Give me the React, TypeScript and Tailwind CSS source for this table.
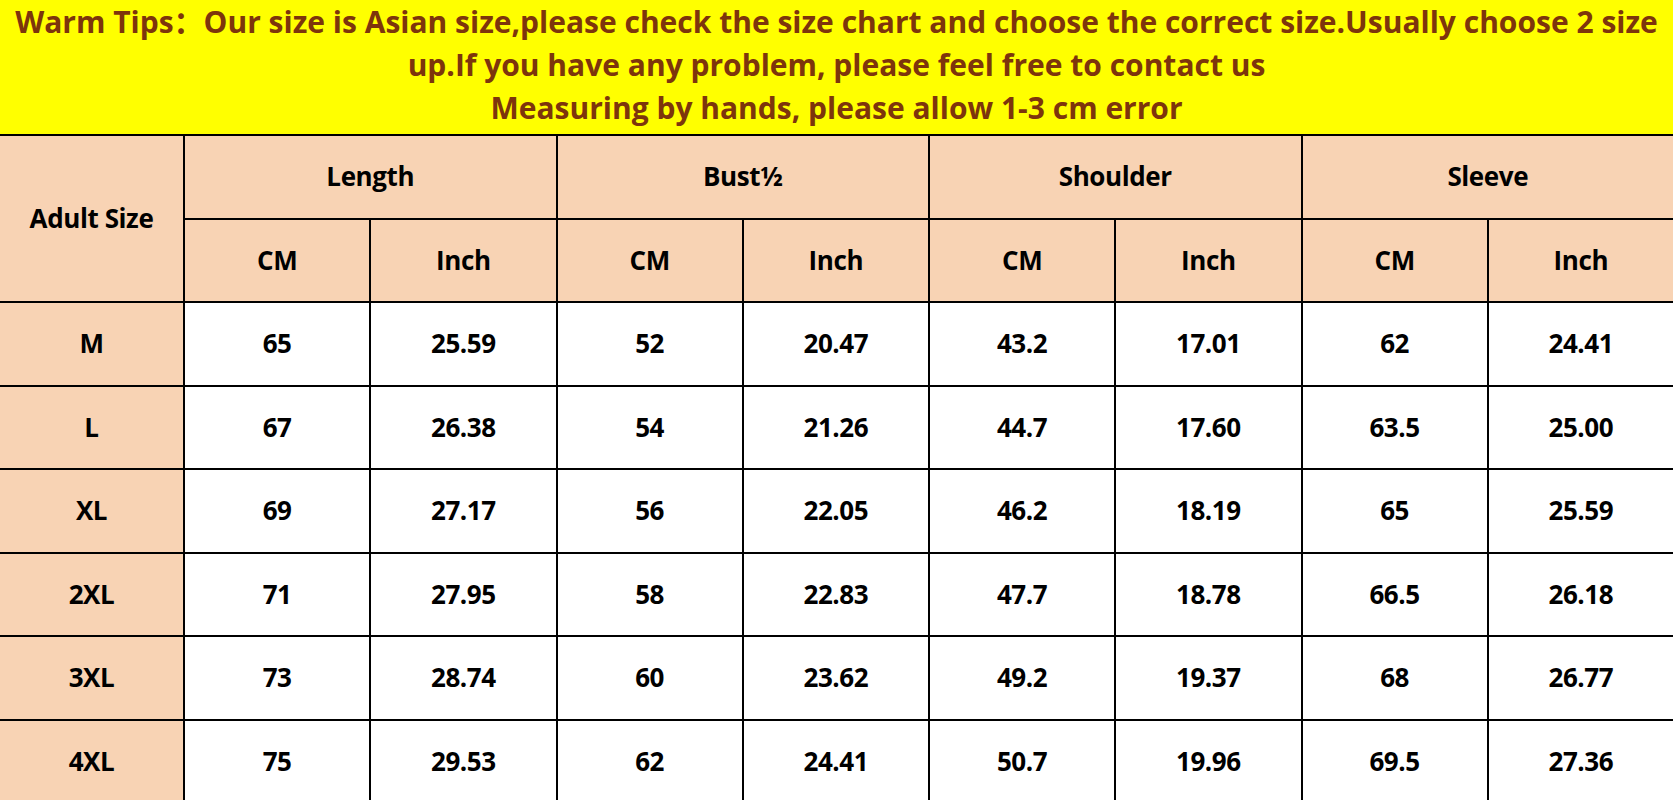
const ROWS = [
    ['M', '65', '25.59', '52', '20.47', '43.2', '17.01', '62', '24.41'],
    ['L', '67', '26.38', '54', '21.26', '44.7', '17.60', '63.5', '25.00'],
    ['XL', '69', '27.17', '56', '22.05', '46.2', '18.19', '65', '25.59'],
    ['2XL', '71', '27.95', '58', '22.83', '47.7', '18.78', '66.5', '26.18'],
    ['3XL', '73', '28.74', '60', '23.62', '49.2', '19.37', '68', '26.77'],
    ['4XL', '75', '29.53', '62', '24.41', '50.7', '19.96', '69.5', '27.36'],
]

const GROUPS = ['Length', 'Bust½', 'Shoulder', 'Sleeve']

const font = { fontFamily: '"Open Sans", "Noto Sans", "Noto Sans CJK SC", sans-serif' }

export default function App() {
    return (
        <div className="h-[800px] w-[1673px] overflow-hidden bg-white" style={font}>
            <div className="flex h-[134px] flex-col items-center bg-[#ffff00] text-[30px] leading-[43px] font-bold text-[#7d350c]">
                <div className="whitespace-pre">
                    Warm Tips：Our size is Asian size,please check the size chart and choose the correct size.Usually choose 2 size
                </div>
                <div className="whitespace-nowrap">up.If you have any problem, please feel free to contact us</div>
                <div className="whitespace-nowrap">Measuring by hands, please allow 1-3 cm error</div>
            </div>

            <div className="grid grid-cols-[183px_repeat(8,1fr)] auto-rows-[81.5px] gap-[2px] border-t-2 border-black bg-black text-[26px] font-bold tracking-[-0.4px] text-black">
                <div className="row-span-2 flex items-center justify-center bg-[#f8d3b4]">Adult Size</div>
                {GROUPS.map(g => (
                    <div key={g} className="col-span-2 flex items-center justify-center bg-[#f8d3b4]">
                        {g}
                    </div>
                ))}
                {GROUPS.map(g => (
                    <>
                        <div key={g + 'cm'} className="flex items-center justify-center bg-[#f8d3b4]">
                            CM
                        </div>
                        <div key={g + 'in'} className="flex items-center justify-center bg-[#f8d3b4]">
                            Inch
                        </div>
                    </>
                ))}
                {ROWS.map(row =>
                    row.map((cell, i) => (
                        <div
                            key={row[0] + i}
                            className={`flex items-center justify-center ${i === 0 ? 'bg-[#f8d3b4]' : 'bg-white'}`}
                        >
                            {cell}
                        </div>
                    ))
                )}
            </div>
        </div>
    )
}
